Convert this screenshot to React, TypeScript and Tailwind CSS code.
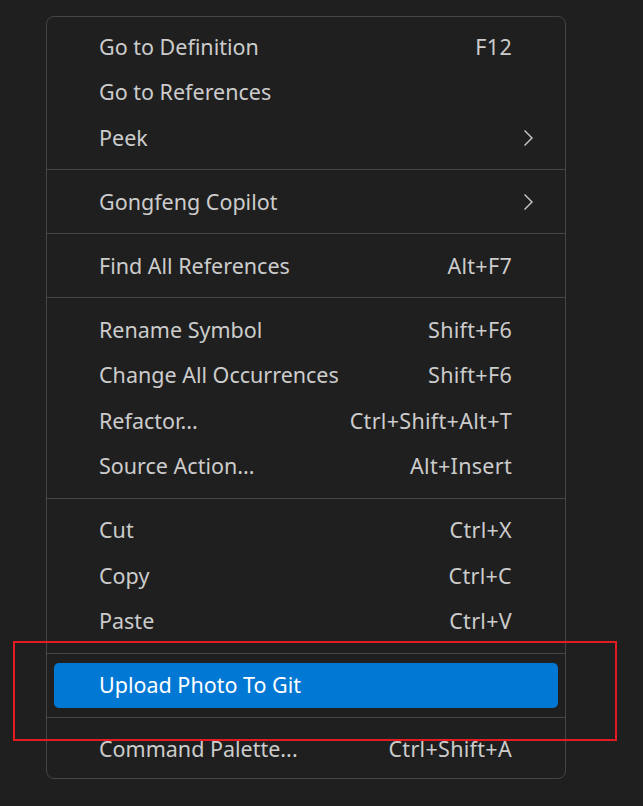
import React from 'react';

type Item = { label: string; keys?: string; sub?: boolean; active?: boolean };

const groups: Item[][] = [
  [
    { label: 'Go to Definition', keys: 'F12' },
    { label: 'Go to References' },
    { label: 'Peek', sub: true },
  ],
  [{ label: 'Gongfeng Copilot', sub: true }],
  [{ label: 'Find All References', keys: 'Alt+F7' }],
  [
    { label: 'Rename Symbol', keys: 'Shift+F6' },
    { label: 'Change All Occurrences', keys: 'Shift+F6' },
    { label: 'Refactor...', keys: 'Ctrl+Shift+Alt+T' },
    { label: 'Source Action...', keys: 'Alt+Insert' },
  ],
  [
    { label: 'Cut', keys: 'Ctrl+X' },
    { label: 'Copy', keys: 'Ctrl+C' },
    { label: 'Paste', keys: 'Ctrl+V' },
  ],
  [{ label: 'Upload Photo To Git', active: true }],
  [{ label: 'Command Palette...', keys: 'Ctrl+Shift+A' }],
];

const Chevron = () => (
  <svg width="11" height="18" viewBox="0 0 11 18" fill="none" className="mr-[-22px]">
    <path d="M1.5 1.5 L9 9 L1.5 16.5" stroke="#cccccc" strokeWidth="1.4" />
  </svg>
);

const MenuRow: React.FC<{ item: Item }> = ({ item }) => (
  <div className="px-[7px]">
    <div
      className={`flex h-[45.5px] items-center justify-between rounded-[5px] pl-[45px] pr-[46px] ${
        item.active ? 'bg-[#0078d4] text-white' : 'text-[#cccccc]'
      }`}
    >
      <span>{item.label}</span>
      {item.keys && <span className="tracking-[0.3px]">{item.keys}</span>}
      {item.sub && <Chevron />}
    </div>
  </div>
);

export default function App() {
  return (
    <div className="relative h-[806px] w-[643px] bg-[#1f1f1f] pt-4 font-['Noto_Sans',sans-serif] text-[21.5px]">
      <div className="ml-[46px] w-[520px] rounded-lg border border-[#454545] bg-[#1f1f1f] pb-[6px] pt-[7px]">
        {groups.map((g, i) => (
          <div key={i}>
            {i > 0 && <div className="my-[8.75px] h-px bg-[#454545]" />}
            {g.map((item) => (
              <MenuRow key={item.label} item={item} />
            ))}
          </div>
        ))}
      </div>
      {/* highlight annotation */}
      <div className="pointer-events-none absolute left-[13px] top-[641px] h-[100px] w-[604px] border-2 border-[#e31b23]" />
    </div>
  );
}
